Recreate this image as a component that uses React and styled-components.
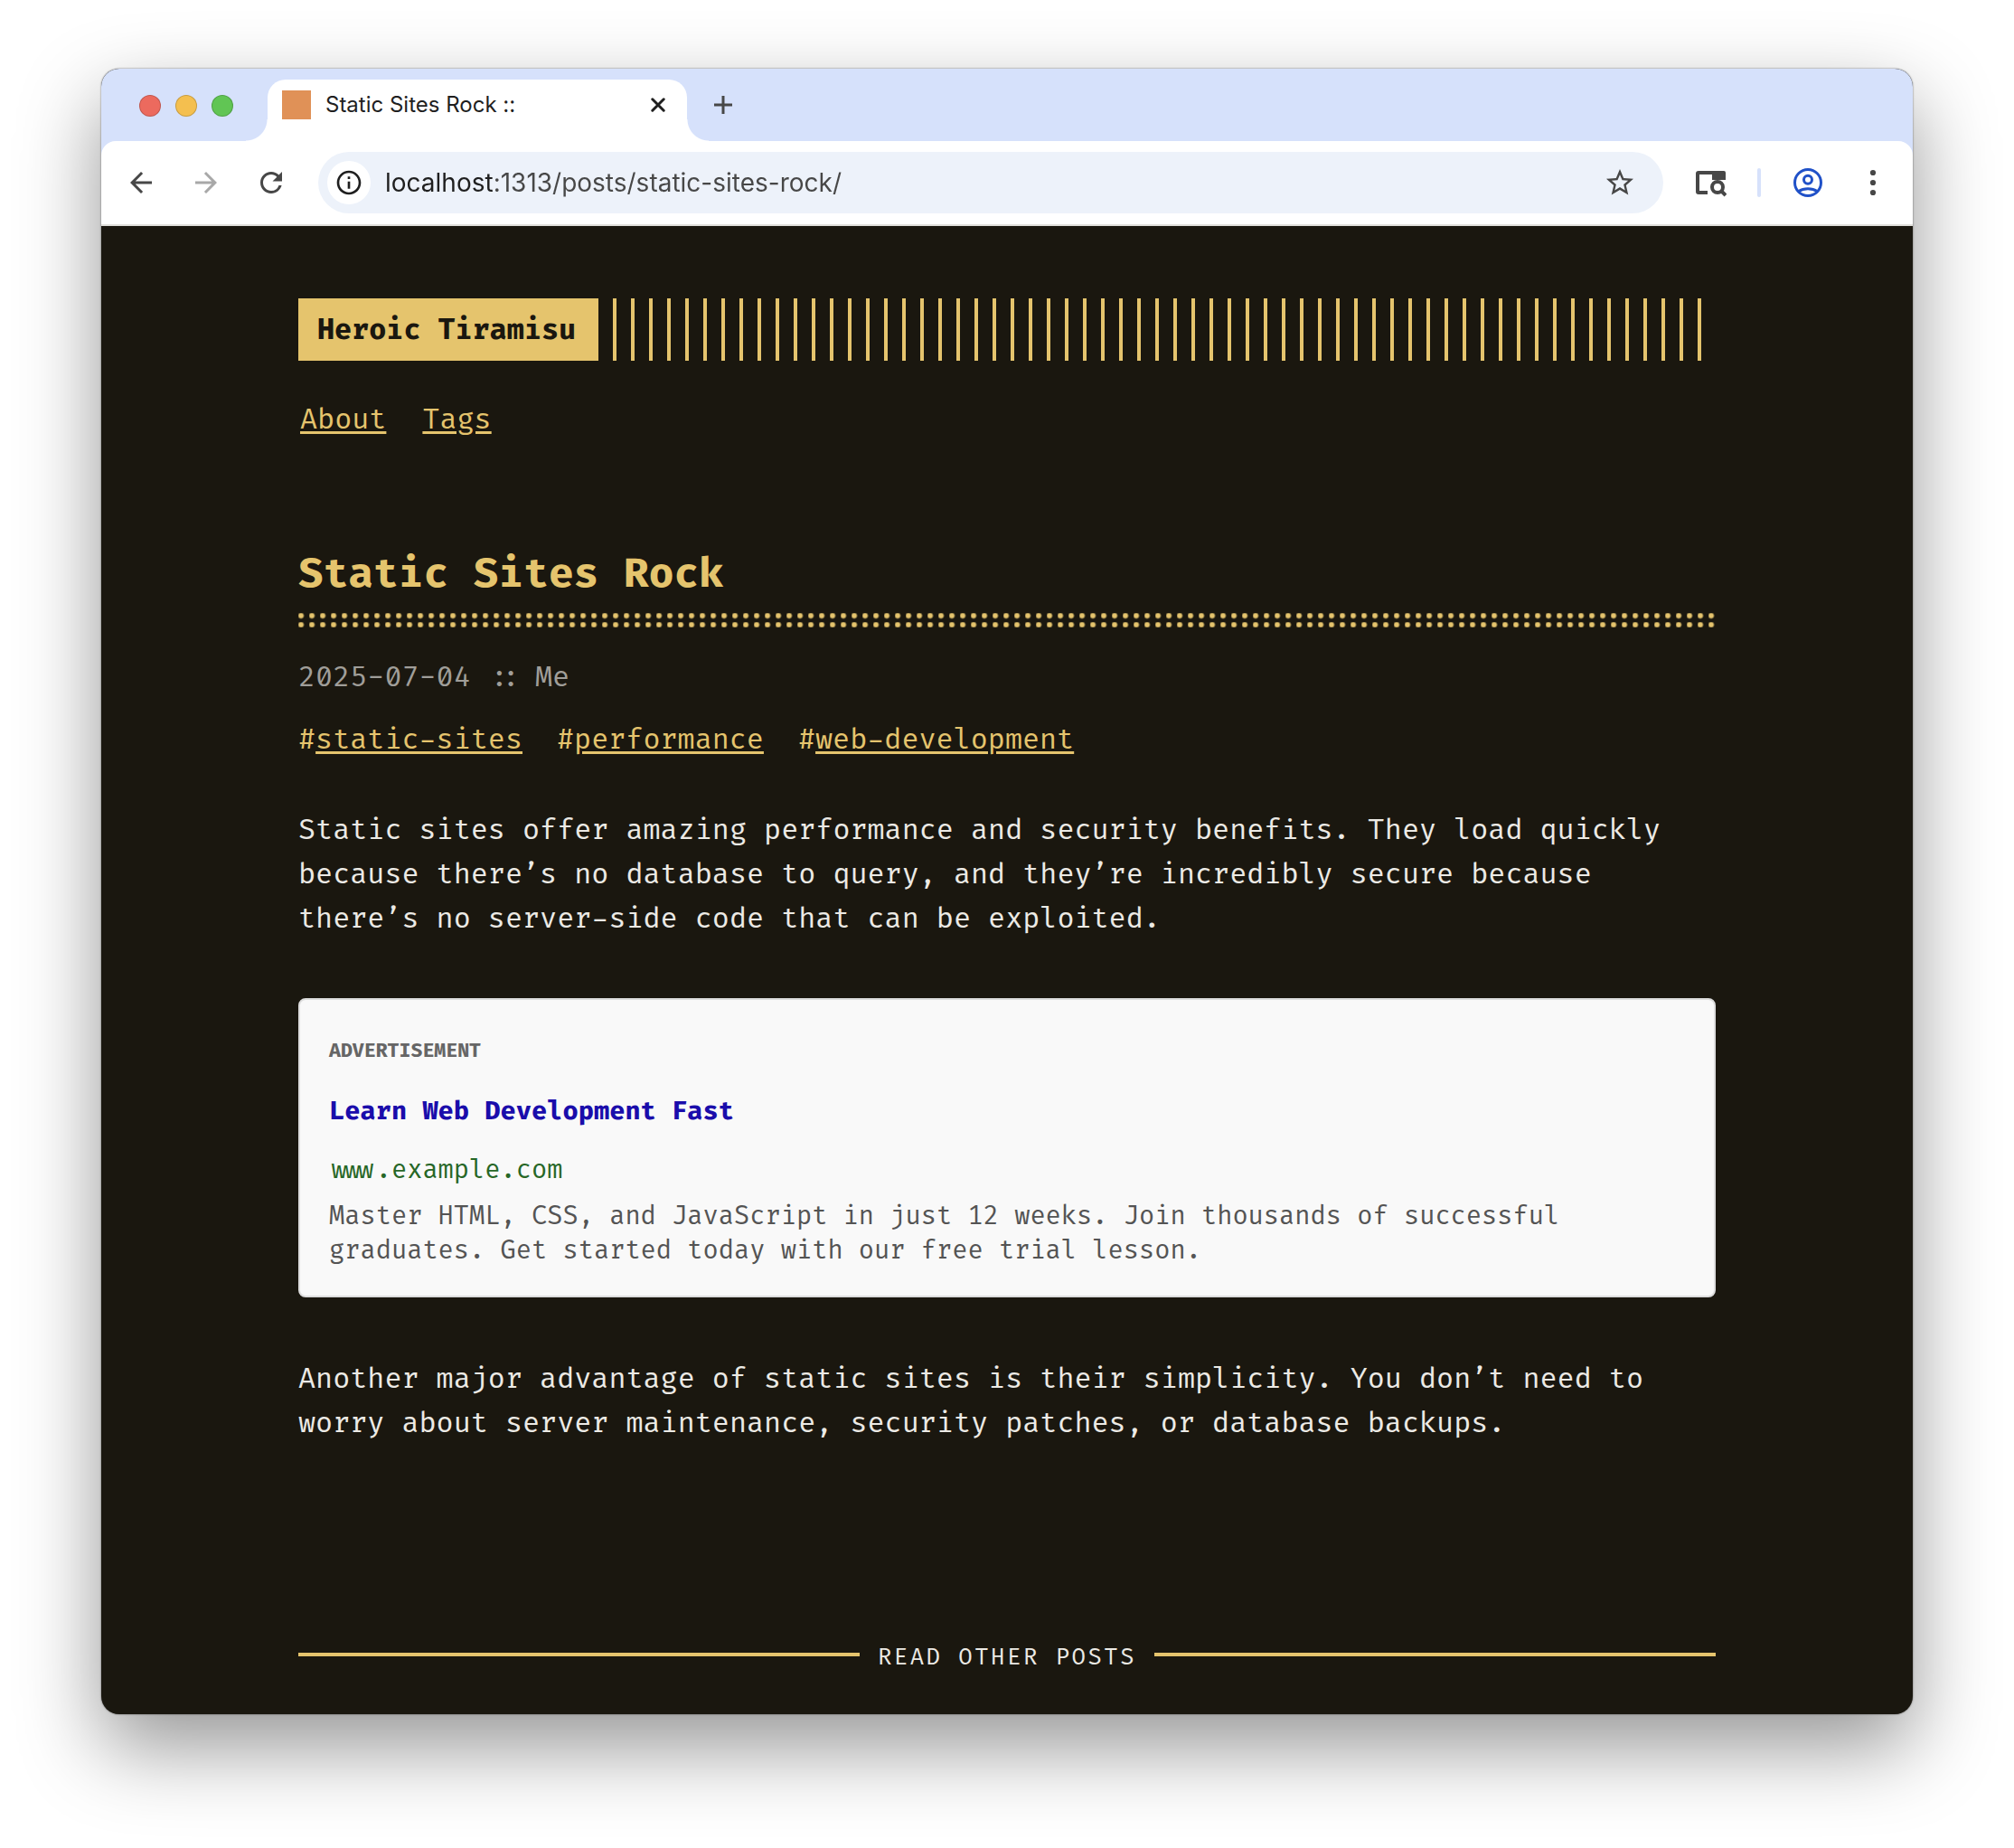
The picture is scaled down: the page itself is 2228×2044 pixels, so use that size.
import React from "react";
import styled, { createGlobalStyle } from "styled-components";
import { MdArrowBack, MdArrowForward, MdRefresh, MdOutlineInfo, MdStarBorder } from "react-icons/md";

const ink = "#1a170f";
const paper = "#eceae5";
const accent = "#e5c46d";
const strip = "#d6e1fb";
const mono = `"Fira Code", "Liberation Mono", monospace`;
const ui = `Inter, "Liberation Sans", sans-serif`;

const GlobalStyle = createGlobalStyle`
  *, *::before, *::after { box-sizing: border-box; }
  body { margin: 0; background: #fff; }
  button, input { font: inherit; }
  h1, h2, h3, p { margin: 0; font-size: inherit; font-weight: 400; }
`;

const Desktop = styled.div`
  padding: 76px 112px 148px;
  overflow: hidden;
`;

const Window = styled.div`
  border-radius: 20px;
  overflow: hidden;
  background: ${ink};
  box-shadow: 0 0 2px rgba(0, 0, 0, 0.6), 0 36px 90px rgba(0, 0, 0, 0.42);
`;

const TabStrip = styled.header`
  display: flex;
  align-items: flex-end;
  height: 80px;
  background: ${strip};
`;

const Lights = styled.div`
  display: flex;
  align-self: center;
  gap: 16px;
  width: 184px;
  padding: 2px 0 0 42px;
`;

const Light = styled.button`
  width: 24px;
  height: 24px;
  padding: 0;
  border: 1px solid rgba(0, 0, 0, 0.18);
  border-radius: 50%;
  background: ${(p) => p.$color};
`;

const Tab = styled.div`
  position: relative;
  display: flex;
  align-items: center;
  gap: 16px;
  width: 464px;
  height: 68px;
  padding: 0 16px 12px;
  border-radius: 20px 20px 0 0;
  background: #fff;

  &::before,
  &::after {
    content: "";
    position: absolute;
    bottom: 0;
    width: 24px;
    height: 24px;
  }
  &::before {
    right: 100%;
    background: radial-gradient(circle at 0 0, transparent 23px, #fff 24px);
  }
  &::after {
    left: 100%;
    background: radial-gradient(circle at 100% 0, transparent 23px, #fff 24px);
  }
`;

const Favicon = styled.span`
  width: 32px;
  height: 32px;
  background: #e09157;
`;

const TabTitle = styled.span`
  flex: 1;
  font: 400 24px/32px ${ui};
  color: #1f1f1f;
`;

const IconButton = styled.button`
  display: flex;
  align-items: center;
  justify-content: center;
  flex: none;
  width: ${(p) => p.$size}px;
  height: ${(p) => p.$size}px;
  padding: 0;
  border: 0;
  border-radius: 50%;
  background: ${(p) => p.$fill || "none"};
  color: ${(p) => p.$color || "#474747"};
`;

const NewTab = styled.div`
  padding: 0 0 24px 24px;
`;

const ToolbarBack = styled.div`
  background: ${strip};
`;

const Toolbar = styled.nav`
  display: flex;
  align-items: center;
  height: 94px;
  padding: 0 28px 0 26px;
  border-bottom: 2px solid #e1e0dc;
  border-radius: 16px 16px 0 0;
  background: #fff;
`;

const NavButtons = styled.div`
  display: flex;
  gap: 36px;
  width: 214px;
`;

const AddressBar = styled.div`
  display: flex;
  flex: 1;
  align-items: center;
  gap: 16px;
  height: 68px;
  padding: 0 30px 0 10px;
  border-radius: 34px;
  background: #edf2fa;
`;

const Address = styled.input`
  flex: 1;
  min-width: 0;
  padding: 0;
  border: 0;
  outline: 0;
  font: 400 28px/40px ${ui};
  color: #474747;
  background: linear-gradient(90deg, #1f1f1f 119px, #474747 119px);
  background-clip: text;
  -webkit-text-fill-color: transparent;
`;

const Actions = styled.div`
  display: flex;
  align-items: center;
  padding-left: 34px;
`;

const Divider = styled.span`
  width: 4px;
  height: 32px;
  margin: 0 34px;
  border-radius: 2px;
  background: ${strip};
`;

const MenuSlot = styled.span`
  padding-left: 38px;
`;

const Page = styled.main`
  max-width: 1648px;
  margin: 0 auto;
  padding: 80px 40px 42px;
  font: 400 31px/49px ${mono};
  color: ${paper};
`;

const SiteHeader = styled.div`
  display: flex;
  color: ${accent};
`;

const Logo = styled.a`
  padding: 11px 21px 9px;
  background: ${accent};
  color: ${ink};
  font-weight: 700;
  text-decoration: none;
`;

const Stripes = styled.div`
  flex: 1;
  background: repeating-linear-gradient(90deg, ${accent} 0 4px, transparent 4px 20px);
`;

const Link = styled.a`
  color: ${accent};
  text-decoration: underline;
  text-decoration-thickness: 3px;
  text-underline-offset: 3px;
`;

const Menu = styled.nav`
  display: flex;
  gap: 40px;
  padding: 41px 2px 0;
`;

const PostTitle = styled.h1`
  padding-top: 116px;
  font-size: 45px;
  font-weight: 700;
  line-height: 60px;
  color: ${accent};

  &::after {
    content: "";
    display: block;
    height: 16px;
    margin-top: 13px;
    background: radial-gradient(circle at 3px 3px, ${accent} 2px, transparent 4px) 0 0 / 12px 10px;
  }
`;

const Meta = styled.p`
  padding-top: 31px;
  color: #a09e99;
`;

const Separator = styled.span`
  margin: 0 14px 0 19px;
`;

const Tags = styled.div`
  display: flex;
  flex-wrap: wrap;
  gap: 38px;
  padding-top: 20px;
  color: ${accent};
`;

const Paragraph = styled.p`
  padding-top: 51px;
`;

const Ad = styled.aside`
  margin: 63px 0 15px;
  padding: 40px 32px 30px;
  border: 2px solid #ddd;
  border-radius: 8px;
  background: #f9f9f9;
  font-size: 28px;
  line-height: 38px;
  color: #545454;
`;

const AdLabel = styled.p`
  font-size: 21px;
  font-weight: 700;
  line-height: 34px;
  color: #666;
`;

const AdTitle = styled.h3`
  padding-top: 31px;
  font-weight: 700;
  color: #1a0dab;
`;

const AdUrl = styled.a`
  display: block;
  padding: 27px 0 13px;
  color: #276727;
  text-decoration: none;
`;

const Other = styled.div`
  display: flex;
  align-items: center;
  gap: 20px;
  padding-top: 207px;

  &::before,
  &::after {
    content: "";
    flex: 1;
    height: 4px;
    background: ${accent};
  }
`;

const OtherTitle = styled.h2`
  padding-top: 8px;
  font-size: 25px;
  line-height: 40px;
  letter-spacing: 0.1em;
`;

const CloseIcon = () => (
  <svg width="16" height="16" viewBox="0 0 16 16" stroke="currentColor" strokeWidth="3" strokeLinecap="round">
    <path d="M1.8 1.8 14.2 14.2M14.2 1.8 1.8 14.2" />
  </svg>
);

const PlusIcon = () => (
  <svg width="20" height="20" viewBox="0 0 20 20" stroke="currentColor" strokeWidth="3">
    <path d="M10 0V20M0 10H20" />
  </svg>
);

const SearchPanelIcon = () => (
  <svg width="36" height="32" viewBox="0 0 36 32" fill="none" stroke="currentColor" strokeWidth="4">
    <path d="M15 27H5a1 1 0 0 1-1-1V6a1 1 0 0 1 1-1H20" />
    <path d="M20 3h13a2 2 0 0 1 2 2v8H20z" fill="currentColor" stroke="none" />
    <circle cx="26" cy="21" r="6" />
    <path d="M30 25 35 30" />
  </svg>
);

const ProfileIcon = () => (
  <svg width="32" height="32" viewBox="0 0 32 32" fill="none" stroke="currentColor" strokeWidth="3">
    <circle cx="16" cy="16" r="14.5" />
    <circle cx="16" cy="12.8" r="4.5" />
    <path d="M5.5 25.8C11.5 21.8 20.5 21.8 26.5 25.8" />
  </svg>
);

const DotsIcon = () => (
  <svg width="8" height="32" viewBox="0 0 8 32" fill="currentColor">
    <circle cx="4" cy="5" r="3.1" />
    <circle cx="4" cy="16" r="3.1" />
    <circle cx="4" cy="27" r="3.1" />
  </svg>
);

const lights = [
  ["Close window", "#ec6a5e"],
  ["Minimise window", "#f4bf4f"],
  ["Zoom window", "#61c554"],
];

const tags = ["static-sites", "performance", "web-development"];

export default function App() {
  return (
    <Desktop>
      <GlobalStyle />
      <Window>
        <TabStrip>
          <Lights>
            {lights.map(([label, color]) => (
              <Light key={label} aria-label={label} $color={color} />
            ))}
          </Lights>
          <Tab>
            <Favicon />
            <TabTitle>Static Sites Rock ::</TabTitle>
            <IconButton $size={32} $color="#1f1f1f" aria-label="Close tab">
              <CloseIcon />
            </IconButton>
          </Tab>
          <NewTab>
            <IconButton $size={32} aria-label="New tab">
              <PlusIcon />
            </IconButton>
          </NewTab>
        </TabStrip>
        <ToolbarBack>
          <Toolbar>
            <NavButtons>
              <IconButton $size={36} aria-label="Back"><MdArrowBack size={36} /></IconButton>
              <IconButton $size={36} $color="#a8a8a8" aria-label="Forward"><MdArrowForward size={36} /></IconButton>
              <IconButton $size={36} aria-label="Reload"><MdRefresh size={36} /></IconButton>
            </NavButtons>
            <AddressBar>
              <IconButton $size={48} $fill="#fff" $color="#1f1f1f" aria-label="Site information">
                <MdOutlineInfo size={32} />
              </IconButton>
              <Address aria-label="Address" defaultValue="localhost:1313/posts/static-sites-rock/" />
              <IconButton $size={36} aria-label="Bookmark this page"><MdStarBorder size={36} /></IconButton>
            </AddressBar>
            <Actions>
              <IconButton $size={36} aria-label="Search side panel"><SearchPanelIcon /></IconButton>
              <Divider />
              <IconButton $size={36} $color="#2051c8" aria-label="Profile"><ProfileIcon /></IconButton>
              <MenuSlot>
                <IconButton $size={32} aria-label="Menu"><DotsIcon /></IconButton>
              </MenuSlot>
            </Actions>
          </Toolbar>
        </ToolbarBack>
        <Page>
          <SiteHeader>
            <Logo href="#home">Heroic Tiramisu</Logo>
            <Stripes />
          </SiteHeader>
          <Menu>
            <Link href="#about">About</Link>
            <Link href="#tags">Tags</Link>
          </Menu>
          <article>
            <PostTitle>Static Sites Rock</PostTitle>
            <Meta>
              <time dateTime="2025-07-04">2025-07-04</time>
              <Separator>::</Separator>
              <span>Me</span>
            </Meta>
            <Tags>
              {tags.map((tag) => (
                <span key={tag}>
                  #<Link href={`#${tag}`}>{tag}</Link>
                </span>
              ))}
            </Tags>
            <Paragraph>
              Static sites offer amazing performance and security benefits. They load quickly because there’s no
              database to query, and they’re incredibly secure because there’s no server-side code that can be
              exploited.
            </Paragraph>
            <Ad>
              <AdLabel>ADVERTISEMENT</AdLabel>
              <AdTitle>Learn Web Development Fast</AdTitle>
              <AdUrl href="#ad">www.example.com</AdUrl>
              <p>
                Master HTML, CSS, and JavaScript in just 12 weeks. Join thousands of successful graduates. Get started
                today with our free trial lesson.
              </p>
            </Ad>
            <Paragraph>
              Another major advantage of static sites is their simplicity. You don’t need to worry about server
              maintenance, security patches, or database backups.
            </Paragraph>
          </article>
          <Other>
            <OtherTitle>READ OTHER POSTS</OtherTitle>
          </Other>
        </Page>
      </Window>
    </Desktop>
  );
}
